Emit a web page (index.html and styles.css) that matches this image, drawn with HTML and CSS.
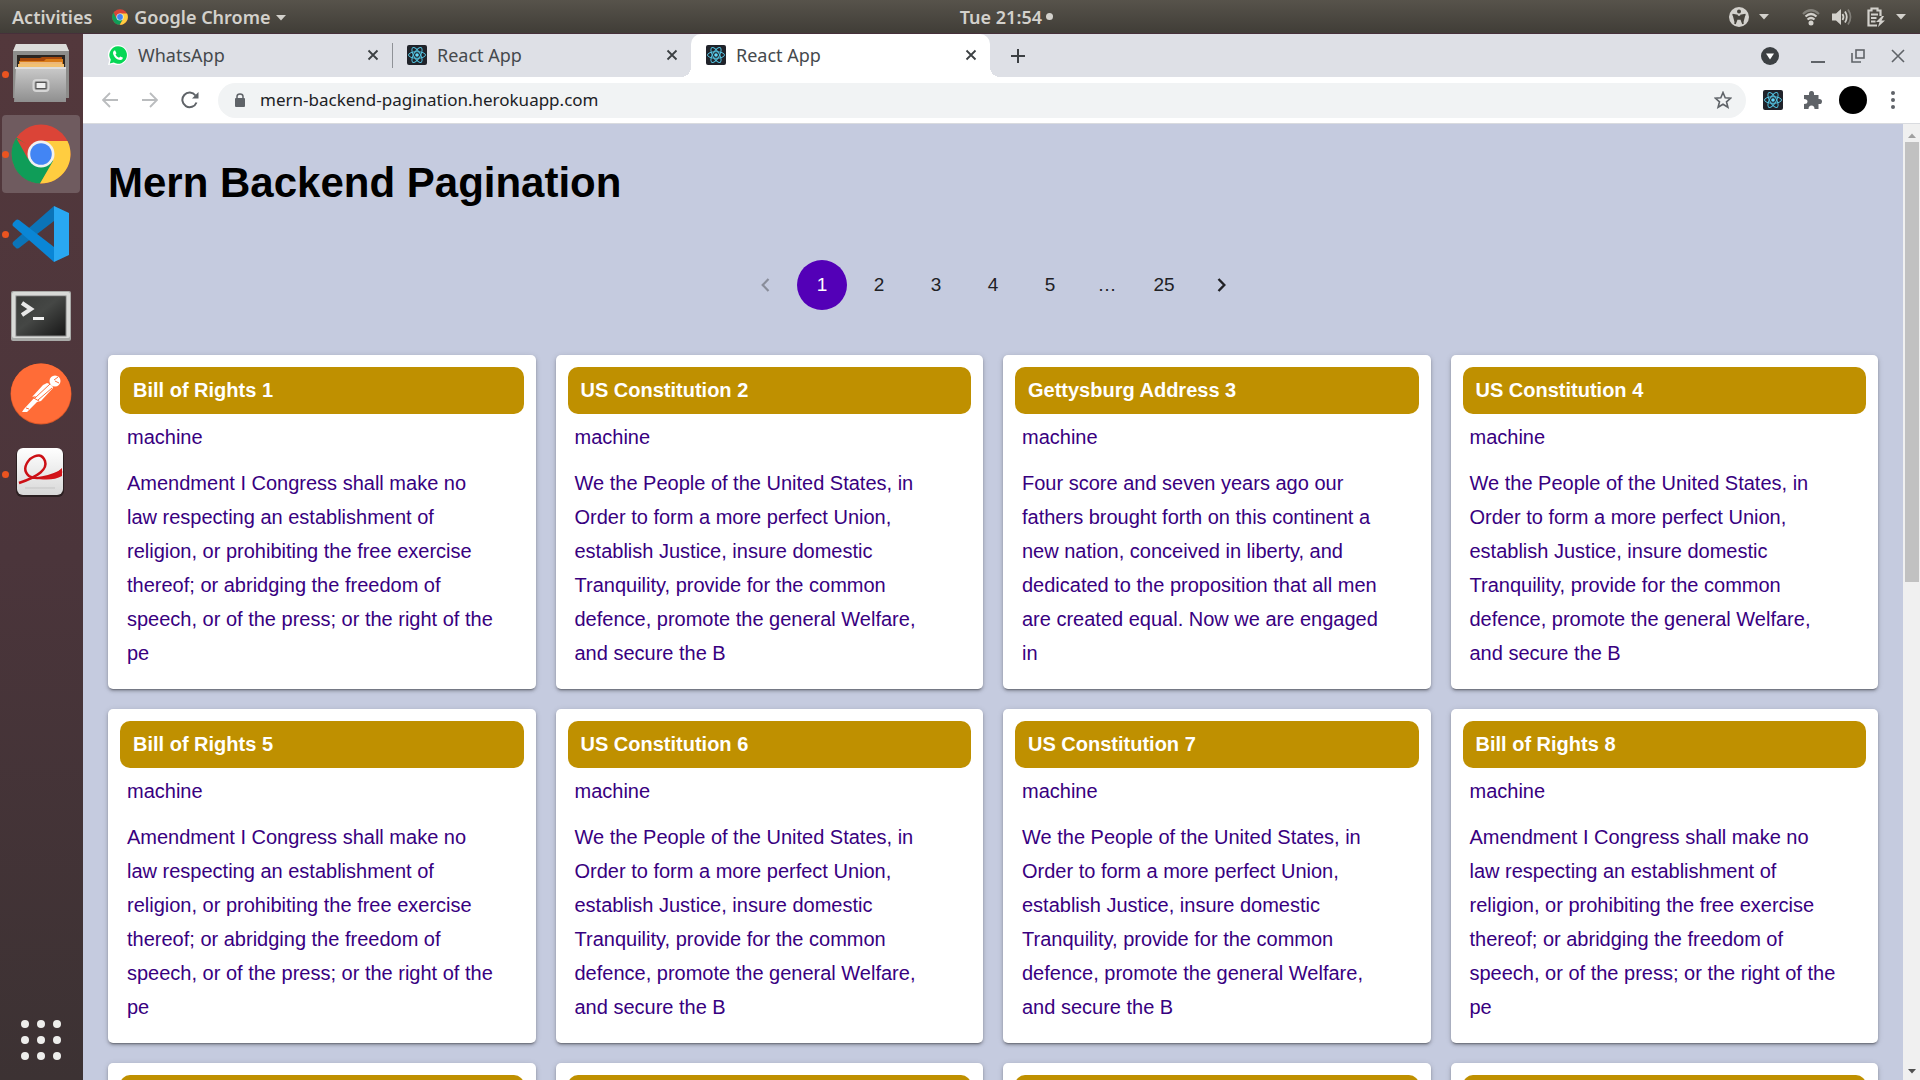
FILE: index.html
```html
<!DOCTYPE html>
<html lang="en">
<head>
<meta charset="utf-8">
<title>React App</title>
<link rel="stylesheet" href="styles.css">
</head>
<body>
<svg class="defs" aria-hidden="true">
  <symbol id="react" viewBox="0 0 20 20">
    <rect width="20" height="20" rx="2" fill="#20232a"/>
    <g fill="none" stroke="#53c1de" stroke-width="1">
      <ellipse cx="10" cy="10" rx="8.5" ry="3.3"/>
      <ellipse cx="10" cy="10" rx="8.5" ry="3.3" transform="rotate(60 10 10)"/>
      <ellipse cx="10" cy="10" rx="8.5" ry="3.3" transform="rotate(120 10 10)"/>
    </g>
    <circle cx="10" cy="10" r="1.8" fill="#61dafb"/>
  </symbol>
  <symbol id="chrome" viewBox="0 0 60 60">
    <circle cx="30" cy="30" r="29.5" fill="#db4437"/>
    <path d="M30 30L5.500 13.500A29.500 29.500 0 0 0 29 59.500L43 37Z" fill="#0f9d58"/>
    <path d="M30 17H56.500A29.500 29.500 0 0 1 29 59.500L42 37Z" fill="#ffcd40"/>
    <path d="M5.500 14.500L17 35L20 22Z" fill="#db4437"/>
    <circle cx="30" cy="30" r="13.500" fill="#f1f1f1"/>
    <circle cx="30" cy="30" r="10.800" fill="#4285f4"/>
  </symbol>
  <symbol id="close" viewBox="0 0 12 12"><path d="M1.500 1.500L10.500 10.500M10.500 1.500L1.500 10.500" stroke="currentColor" stroke-width="1.800" fill="none"/></symbol>
  <symbol id="caret" viewBox="0 0 10 6"><path d="M0 0H10L5 5.500Z" fill="currentColor"/></symbol>
</svg>

<header class="topbar">
  <div class="topbar-left">
    <button class="top-btn">Activities</button>
    <button class="top-btn app-menu"><svg class="i16"><use href="#chrome"/></svg>Google Chrome<svg class="caret"><use href="#caret"/></svg></button>
  </div>
  <button class="top-btn clock">Tue 21:54<span class="dot"></span></button>
  <div class="topbar-right">
    <svg class="a11y" viewBox="0 0 20 20"><circle cx="10" cy="10" r="10" fill="#d3d1cc"/><circle cx="10" cy="4.500" r="2" fill="#46433c"/><path d="M3.500 7.500L8 8.500V11.500L6 17M16.500 7.500L12 8.500V11.500L14 17M8 9.500H12V12H8Z" stroke="#46433c" stroke-width="1.700" fill="#46433c"/></svg>
    <svg class="caret a11y-caret"><use href="#caret"/></svg>
    <svg class="wifi" viewBox="0 0 18 18"><g fill="none" stroke="#d3d1cc" stroke-width="2.200"><path d="M1 6Q9-1.500 17 6" opacity=".4"/><path d="M3.500 8.500Q9 3.500 14.500 8.500"/><path d="M5.500 11.500Q9 8.500 12.500 11.500"/></g><circle cx="9" cy="15" r="2.500" fill="#d3d1cc"/></svg>
    <svg class="volume" viewBox="0 0 20 18"><path d="M0 5.500H4L9 1V17L4 12.500H0Z" fill="#d3d1cc"/><g fill="none" stroke="#d3d1cc" stroke-width="1.800"><path d="M10.500 6Q12.500 9 10.500 12"/><path d="M13 3.500Q16.500 9 13 14.500"/><path d="M16 1.500Q21 9 16 16.500" opacity=".4"/></g></svg>
    <svg class="battery" viewBox="0 0 19 20"><path d="M10 18.500H1.500V3.500H4.500V1.500H10.500V3.500H13.500V9M4 7.500H11M4 11H9.500M4 14.500H8.500" fill="none" stroke="#d3d1cc" stroke-width="2.200"/><path d="M15 9L9 15H12.500L11 20L18 13.500H14.500L17 9Z" fill="#d3d1cc"/></svg>
    <svg class="caret"><use href="#caret"/></svg>
  </div>
</header>

<div class="desktop">
  <nav class="launcher" aria-label="Launcher">
    <button class="tile running" aria-label="Files">
      <svg width="58" height="62" viewBox="0 0 58 62">
        <defs><linearGradient id="fg" x1="0" y1="0" x2="0" y2="1"><stop offset="0" stop-color="#c9c9c9"/><stop offset="1" stop-color="#8f8f8f"/></linearGradient></defs>
        <path d="M4 1H54L57 8V55H1V8Z" fill="#8d8d8b"/><path d="M4 1H54L57 8H1Z" fill="#dcdcda"/>
        <rect x="5" y="12" width="48" height="15" fill="#2b2521"/>
        <path d="M8 15H28L30 14H50V26H8Z" fill="#a8490b"/><path d="M7 18H32L34 16H51V26H7Z" fill="#d97c18"/><path d="M6 21H52V26H6Z" fill="#f2c070"/><path d="M8 20H50" stroke="#fff3dc"/>
        <path d="M4 25H54V59H2Z" fill="url(#fg)"/><path d="M3 25H54" stroke="#dedede" stroke-width="2"/>
        <rect x="21.500" y="37" width="15" height="11" rx="3" fill="#999" stroke="#d5d5d5" stroke-width="2"/><rect x="24" y="39.500" width="10" height="6" fill="#eee" stroke="#555"/>
      </svg>
    </button>
    <button class="tile running active" aria-label="Google Chrome"><svg width="60" height="60"><use href="#chrome"/></svg></button>
    <button class="tile running" aria-label="Visual Studio Code">
      <svg width="58" height="58" viewBox="0 0 58 58"><path d="M42 1V16L7 43Q5 44 4 43L1 40Q0 38 1 37Z" fill="#0b74b8"/><path d="M42 57V42L7 15Q5 14 4 15L1 18Q0 20 1 21Z" fill="#0a86d6"/><path d="M42 1L57 8V50L42 57Z" fill="#29a8f2"/></svg>
    </button>
    <button class="tile" aria-label="Terminal">
      <svg width="60" height="54" viewBox="0 -4 60 54"><defs><linearGradient id="tg" x1="0" y1="0" x2="1" y2="1"><stop offset="0" stop-color="#3a3c3a"/><stop offset=".45" stop-color="#454745"/><stop offset="1" stop-color="#181818"/></linearGradient></defs><rect width="60" height="50" rx="2" fill="#a9aaa8"/><rect x="1" y="1" width="58" height="46" rx="2" fill="#d9dad8"/><rect x="5" y="5" width="50" height="40" fill="#222" stroke="#888"/><rect x="6" y="6" width="48" height="38" fill="url(#tg)"/><path d="M11 12L20 18L11 24" fill="none" stroke="#e8e8e8" stroke-width="4"/><path d="M22 27.500H33" stroke="#f2f2f2" stroke-width="3"/></svg>
    </button>
    <button class="tile" aria-label="Postman">
      <svg width="62" height="62" viewBox="0 0 62 62"><circle cx="31" cy="31" r="30.500" fill="#d95728"/><circle cx="31" cy="30.500" r="30" fill="#ff6c37"/><circle cx="45" cy="18" r="5.500" fill="#fff"/><path d="M37 20Q43 22 43 25L31 38L27 39L17 49L12 49L14 46L26 33L22 34L33 22Z" fill="#fff"/><path d="M40 21L25 35M42 25L28 37M44 17L48 14M45 18L49 20M22 34L29 38M16 45L19 46" stroke="#ff6c37" fill="none"/></svg>
    </button>
    <button class="tile running" aria-label="Document Viewer">
      <svg width="50" height="54" viewBox="1 0 50 54"><defs><linearGradient id="dg" x1="0" y1="0" x2="0" y2="1"><stop offset="0" stop-color="#fff"/><stop offset="1" stop-color="#d8d8d8"/></linearGradient></defs><rect x="1" y="2" width="48" height="48" rx="6" fill="#2c2022"/><rect x="2" y="1" width="46" height="47" rx="6" fill="url(#dg)"/><path d="M4 36Q34 26 30 14Q26 4 15 12Q6 22 14 29Q23 35 47 24" fill="none" stroke="#cc1016" stroke-width="2.500"/><path d="M24 32Q38 30 47 21V29Q38 34 24 32Z" fill="#d3151b"/><path d="M10 41H40" stroke="#c5c5c5"/></svg>
    </button>
    <button class="tile apps" aria-label="Show Applications">
      <svg width="40" height="40" viewBox="0 0 40 40" fill="#eeeeec"><circle cx="4" cy="4" r="4"/><circle cx="20" cy="4" r="4"/><circle cx="36" cy="4" r="4"/><circle cx="4" cy="20" r="4"/><circle cx="20" cy="20" r="4"/><circle cx="36" cy="20" r="4"/><circle cx="4" cy="36" r="4"/><circle cx="20" cy="36" r="4"/><circle cx="36" cy="36" r="4"/></svg>
    </button>
  </nav>

  <div class="browser">
    <div class="tabstrip">
      <div class="tab">
        <svg class="fav" viewBox="0 0 20 20"><path d="M10 0A10 10 0 1 1 5.500 19L0 20L1.300 15A10 10 0 0 1 10 0Z" fill="#fff"/><path d="M10 1.200A8.800 8.800 0 1 1 5.700 17.600L1.800 18.500L2.800 14.800A8.800 8.800 0 0 1 10 1.200Z" fill="#06d755"/><path d="M7 5.200L8.500 8.200L7.500 9.500Q8.500 11.800 11 12.700L12.300 11.400L15 12.800Q14.500 15 12.500 15Q9 15 6.500 11.700Q4 8.300 5.700 6Z" fill="#fff"/></svg>
        <span class="tab-title">WhatsApp</span><button class="tab-close" aria-label="Close tab"><svg><use href="#close"/></svg></button>
      </div>
      <div class="tab divided">
        <svg class="fav"><use href="#react"/></svg>
        <span class="tab-title">React App</span><button class="tab-close" aria-label="Close tab"><svg><use href="#close"/></svg></button>
      </div>
      <div class="tab current">
        <svg class="fav"><use href="#react"/></svg>
        <span class="tab-title">React App</span><button class="tab-close" aria-label="Close tab"><svg><use href="#close"/></svg></button>
      </div>
      <button class="new-tab" aria-label="New tab"><svg width="16" height="16" viewBox="0 0 16 16"><path d="M8 1V15M1 8H15" stroke="#3c4043" stroke-width="2"/></svg></button>
      <div class="window-controls">
        <button aria-label="Search tabs"><svg width="18" height="18" viewBox="0 0 18 18"><circle cx="9" cy="9" r="9" fill="#3c4043"/><path d="M5 6.500H13L9 12.500Z" fill="#fff"/></svg></button>
        <button aria-label="Minimize"><svg width="14" height="14" viewBox="0 0 14 14"><path d="M0 13H14" stroke="#5f6368" stroke-width="2"/></svg></button>
        <button aria-label="Restore"><svg width="14" height="14" viewBox="0 0 14 14" fill="none" stroke="#5f6368" stroke-width="1.600"><rect x="5" y="1" width="8" height="8"/><path d="M1 4V13H10"/></svg></button>
        <button aria-label="Close"><svg width="14" height="14" viewBox="0 0 14 14"><path d="M1 1L13 13M13 1L1 13" stroke="#5f6368" stroke-width="1.600"/></svg></button>
      </div>
    </div>

    <div class="toolbar">
      <button class="nav-btn" aria-label="Back"><svg width="16" height="16" viewBox="0 0 16 16" fill="none" stroke="#babcbe" stroke-width="1.800"><path d="M16 8H1.500M8 1L1 8L8 15"/></svg></button>
      <button class="nav-btn" aria-label="Forward"><svg width="16" height="16" viewBox="0 0 16 16" fill="none" stroke="#babcbe" stroke-width="1.800"><path d="M0 8H14.500M8 1L15 8L8 15"/></svg></button>
      <button class="nav-btn" aria-label="Reload"><svg width="18" height="18" viewBox="0 0 18 18"><path d="M15.500 11.500A7.300 7.300 0 1 1 14.500 4.500" fill="none" stroke="#5f6368" stroke-width="2"/><path d="M17.500 1V7.500H11Z" fill="#5f6368"/></svg></button>
      <div class="omnibox">
        <svg width="12" height="15" viewBox="0 0 12 15"><rect x="1" y="5" width="10" height="9" rx="1" fill="#5f6368"/><path d="M3 6V3.500Q3 1 6 1Q9 1 9 3.500V6" fill="none" stroke="#5f6368" stroke-width="1.500"/></svg>
        <input class="url" type="text" aria-label="Address" value="mern-backend-pagination.herokuapp.com">
        <svg width="18" height="18" viewBox="0 0 18 18"><path d="M9 1.500L11.200 6.700L16.800 7.100L12.500 10.800L13.900 16.300L9 13.300L4.100 16.300L5.500 10.800L1.200 7.100L6.800 6.700Z" fill="none" stroke="#5f6368" stroke-width="1.600"/></svg>
      </div>
      <div class="extensions">
        <button aria-label="React Developer Tools"><svg class="fav"><use href="#react"/></svg></button>
        <button aria-label="Extensions"><svg width="18" height="18" viewBox="0 0 18 18"><path d="M0 4H5Q4.500 0 7.500 0Q10.500 0 10 4H14.500V8Q18 7.500 18 10.500Q18 13.500 14.500 13V18H10.500Q10.500 14.500 7.500 14.500Q4.500 14.500 4.500 18H0V13Q3.500 13 3.500 10.500Q3.500 8 0 8Z" fill="#5f6368"/></svg></button>
        <button aria-label="Profile"><span class="avatar"></span></button>
        <button aria-label="Menu"><svg width="4" height="18" viewBox="0 0 4 18" fill="#5f6368"><circle cx="2" cy="2" r="2"/><circle cx="2" cy="9" r="2"/><circle cx="2" cy="16" r="2"/></svg></button>
      </div>
    </div>

    <div class="viewport">
      <main class="page">
        <h1>Mern Backend Pagination</h1>
        <nav class="pagination" aria-label="Pagination">
          <button disabled aria-label="Previous page"><svg width="9" height="14" viewBox="0 0 9 14"><path d="M7.500 1L1.700 7L7.500 13" fill="none" stroke="currentColor" stroke-width="2.200"/></svg></button>
          <button class="selected" aria-current="page">1</button>
          <button>2</button><button>3</button><button>4</button><button>5</button>
          <span class="ellipsis">…</span>
          <button>25</button>
          <button aria-label="Next page"><svg width="9" height="14" viewBox="0 0 9 14"><path d="M1.500 1L7.300 7L1.500 13" fill="none" stroke="currentColor" stroke-width="2.400"/></svg></button>
        </nav>
        <section class="cards">
          <article class="card"><h2>Bill of Rights 1</h2><p class="tag">machine</p><p class="text">Amendment I Congress shall make no law respecting an establishment of religion, or prohibiting the free exercise thereof; or abridging the freedom of speech, or of the press; or the right of the pe</p></article>
          <article class="card"><h2>US Constitution 2</h2><p class="tag">machine</p><p class="text">We the People of the United States, in Order to form a more perfect Union, establish Justice, insure domestic Tranquility, provide for the common defence, promote the general Welfare, and secure the B</p></article>
          <article class="card"><h2>Gettysburg Address 3</h2><p class="tag">machine</p><p class="text">Four score and seven years ago our fathers brought forth on this continent a new nation, conceived in liberty, and dedicated to the proposition that all men are created equal. Now we are engaged in</p></article>
          <article class="card"><h2>US Constitution 4</h2><p class="tag">machine</p><p class="text">We the People of the United States, in Order to form a more perfect Union, establish Justice, insure domestic Tranquility, provide for the common defence, promote the general Welfare, and secure the B</p></article>
          <article class="card"><h2>Bill of Rights 5</h2><p class="tag">machine</p><p class="text">Amendment I Congress shall make no law respecting an establishment of religion, or prohibiting the free exercise thereof; or abridging the freedom of speech, or of the press; or the right of the pe</p></article>
          <article class="card"><h2>US Constitution 6</h2><p class="tag">machine</p><p class="text">We the People of the United States, in Order to form a more perfect Union, establish Justice, insure domestic Tranquility, provide for the common defence, promote the general Welfare, and secure the B</p></article>
          <article class="card"><h2>US Constitution 7</h2><p class="tag">machine</p><p class="text">We the People of the United States, in Order to form a more perfect Union, establish Justice, insure domestic Tranquility, provide for the common defence, promote the general Welfare, and secure the B</p></article>
          <article class="card"><h2>Bill of Rights 8</h2><p class="tag">machine</p><p class="text">Amendment I Congress shall make no law respecting an establishment of religion, or prohibiting the free exercise thereof; or abridging the freedom of speech, or of the press; or the right of the pe</p></article>
          <article class="card"><h2></h2></article>
          <article class="card"><h2></h2></article>
          <article class="card"><h2></h2></article>
          <article class="card"><h2></h2></article>
        </section>
      </main>
      <div class="scrollbar">
        <svg class="up"><use href="#caret"/></svg>
        <div class="track"><div class="thumb"></div></div>
        <svg class="down"><use href="#caret"/></svg>
      </div>
    </div>
  </div>
</div>
</body>
</html>
```
FILE: styles.css
```css
* { box-sizing: border-box; }
body {
  margin: 0;
  height: 100vh;
  display: flex;
  flex-direction: column;
  overflow: hidden;
  font-family: "Liberation Sans", Arial, sans-serif;
}
svg { display: block; flex: none; }
button {
  display: flex;
  align-items: center;
  justify-content: center;
  flex: none;
  margin: 0;
  padding: 0;
  border: 0;
  background: none;
  font: inherit;
  color: inherit;
}
.defs { position: absolute; width: 0; height: 0; }

/* Desktop top bar */
.topbar {
  flex: none;
  height: 34px;
  display: grid;
  grid-template-columns: 10fr auto 9fr;
  align-items: center;
  padding: 0 14px 0 12px;
  background: linear-gradient(#57534b, #403d37);
  border-bottom: 1px solid #46303a;
  color: #d3d1cc;
  font: 600 18px/24px "Noto Sans", sans-serif;
}
.topbar-left { display: flex; gap: 20px; }
.app-menu { gap: 6px; }
.i16 { width: 16px; height: 16px; }
.caret { width: 10px; height: 6px; }
.app-menu .caret { margin-top: 2px; }
.clock { gap: 4px; }
.dot { width: 7px; height: 7px; border-radius: 50%; background: #d3d1cc; }
.topbar-right { display: flex; justify-content: flex-end; align-items: center; }
.a11y { width: 20px; height: 20px; margin-right: 10px; }
.a11y-caret { margin-right: 33px; }
.wifi { width: 18px; height: 18px; margin-right: 12px; }
.volume { width: 20px; height: 18px; margin-right: 15px; }
.battery { width: 19px; height: 20px; margin-right: 10px; }

.desktop { flex: 1; min-height: 0; display: flex; }

/* Launcher */
.launcher {
  flex: none;
  width: 83px;
  display: flex;
  flex-direction: column;
  gap: 2px;
  padding: 1px 3px 1px 2px;
  background: linear-gradient(#53383c, #4b353b 50%, #3c3233);
}
.tile { position: relative; height: 78px; border-radius: 4px; }
.tile.active { background: #6f5b5f; }
.tile.running::before {
  content: "";
  position: absolute;
  left: 0;
  top: 36px;
  width: 7px;
  height: 7px;
  border-radius: 50%;
  background: #e95420;
}
.apps { margin-top: auto; }

/* Browser window */
.browser { flex: 1; min-width: 0; display: flex; flex-direction: column; }
.tabstrip {
  flex: none;
  display: flex;
  height: 43px;
  padding-left: 10px;
  background: #dee0e6;
  color: #45494d;
  font: 18px/24px "Noto Sans", sans-serif;
}
.tab {
  position: relative;
  width: 299px;
  display: flex;
  align-items: center;
  gap: 10px;
  padding: 0 11px 1px 15px;
}
.tab-title { flex: 1; }
.fav { width: 20px; height: 20px; }
.tab-close { width: 16px; height: 16px; color: #3c4043; }
.tab-close svg { width: 12px; height: 12px; }
.tab.divided::before {
  content: "";
  position: absolute;
  left: 0;
  top: 9px;
  width: 1px;
  height: 25px;
  background: #8f9297;
}
.tab.current { background: #fff; border-radius: 10px 10px 0 0; }
.tab.current::before, .tab.current::after {
  content: "";
  position: absolute;
  bottom: 0;
  width: 10px;
  height: 10px;
}
.tab.current::before { left: -10px; background: radial-gradient(circle at 0 0, #dee0e6 10px, #fff 10px); }
.tab.current::after { right: -10px; background: radial-gradient(circle at 100% 0, #dee0e6 10px, #fff 10px); }
.new-tab { width: 56px; }
.window-controls { margin-left: auto; display: flex; padding-right: 2px; }
.window-controls button { width: 40px; }
.window-controls button:first-child { width: 56px; }

.toolbar {
  flex: none;
  display: flex;
  align-items: center;
  height: 47px;
  padding: 0 7px;
  background: #fff;
  border-bottom: 1px solid #d9dbdf;
  font: 17px/24px "Noto Sans", sans-serif;
}
.nav-btn { width: 40px; height: 34px; }
.omnibox {
  flex: 1;
  min-width: 0;
  display: flex;
  align-items: center;
  gap: 14px;
  height: 35px;
  margin-left: 8px;
  padding: 0 14px 0 16px;
  border-radius: 18px;
  background: #f1f3f4;
}
.url {
  flex: 1;
  min-width: 0;
  padding: 0;
  border: 0;
  outline: 0;
  background: none;
  font: inherit;
  color: #202124;
}
.extensions { display: flex; margin-left: 7px; }
.extensions button { width: 40px; height: 34px; }
.avatar { width: 28px; height: 28px; border-radius: 50%; background: #000; }

/* Page */
.viewport { flex: 1; min-height: 0; display: flex; background: #c5cbdf; }
.page { flex: 1; min-width: 0; overflow: hidden; padding: 33px 25px 0; }
h1 { margin: 0; font-size: 42px; line-height: 52px; color: #000; }
.pagination {
  display: flex;
  justify-content: center;
  gap: 7px;
  margin: 51px 0 45px;
  font-size: 19px;
  color: #212125;
}
.pagination button, .ellipsis { width: 50px; height: 50px; border-radius: 50%; }
.ellipsis { line-height: 50px; text-align: center; }
.pagination button:disabled { color: #898d9a; }
.pagination .selected { background: #5300b7; color: #fff; }
.cards { display: grid; grid-template-columns: repeat(4, 1fr); gap: 20px; }
.card {
  min-height: 334px;
  padding: 12px 12px 18px;
  border-radius: 5px;
  background: #fff;
  box-shadow: 0 3px 1px -2px rgba(0, 0, 0, .2), 0 2px 3px rgba(0, 0, 0, .25), 0 1px 6px rgba(0, 0, 0, .12);
  color: #38007f;
  font-size: 20px;
  line-height: 34px;
}
.card h2 {
  height: 47px;
  margin: 0;
  padding: 0 13px;
  border-radius: 10px;
  background: #bf9000;
  color: #fff;
  font-size: 20px;
  line-height: 47px;
}
.card p { margin: 0; padding: 0 28px 0 7px; }
.card .tag { margin: 6px 0 12px; }

/* Scrollbar */
.scrollbar {
  flex: none;
  width: 17px;
  display: flex;
  flex-direction: column;
  align-items: center;
  padding: 9px 0 6px;
  background: #f0f0f0;
}
.scrollbar svg { width: 8px; height: 5px; }
.up { color: #a0a0a0; transform: rotate(180deg); }
.down { color: #505050; }
.track { flex: 1; width: 14px; margin: 4px 0 10px; }
.thumb { height: 48%; background: #c1c1c1; }
```
